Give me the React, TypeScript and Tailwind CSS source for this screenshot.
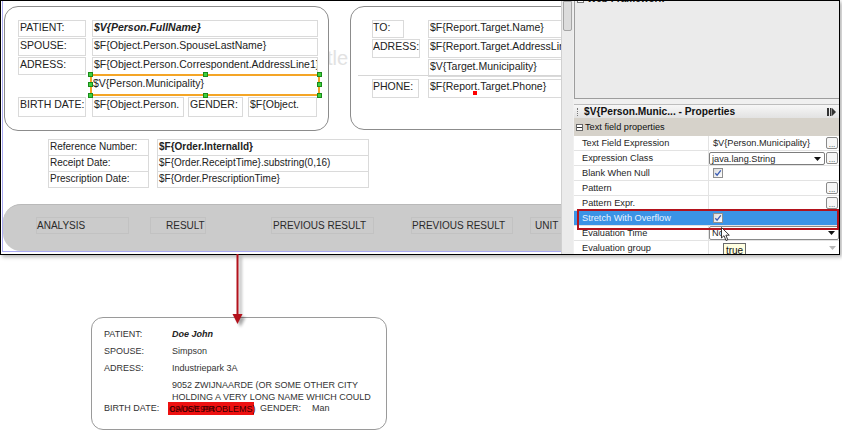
import React from "react";

const cellB = "border border-[#dadada] shrink-0 overflow-hidden whitespace-nowrap";

function Handle({ cls }: { cls: string }) {
  return <div className={"absolute w-[5px] h-[5px] bg-[#3fd13f] border border-[#1b8a1b] " + cls} />;
}

function Check() {
  return (
    <div className="w-[10px] h-[10px] border border-[#8f8f8f] bg-linear-to-br from-[#dcdcdc] to-[#ffffff] flex items-center justify-center">
      <svg width="8" height="8" viewBox="0 0 8 8">
        <path d="M1.3 4.2 L3.1 6.2 L6.8 1.4" stroke="#3a5cb4" strokeWidth="1.3" fill="none" />
      </svg>
    </div>
  );
}

function Dots() {
  return (
    <div className="absolute right-[1px] top-[1px] w-[12px] h-[12px] border border-[#8a8a8a] rounded-[2px] bg-[#f7f7f7] text-[8px] leading-[13px] text-center text-[#333]">
      ...
    </div>
  );
}

function Arrow({ color = "#111" }: { color?: string }) {
  return (
    <svg width="7" height="4" viewBox="0 0 7 4" className="block">
      <path d="M0 0 L7 0 L3.5 4 Z" fill={color} />
    </svg>
  );
}

function PropRow({
  label,
  children,
  hi = false,
}: {
  label: string;
  children?: React.ReactNode;
  hi?: boolean;
}) {
  return (
    <div
      className={
        "flex h-[15px] shrink-0 border-b border-[#e3e3e3] text-[9.2px] leading-[14px] " +
        (hi ? "bg-[#3b93e6] text-[#eaf4ff]" : "bg-white text-[#1e1e1e]")
      }
    >
      <div className={"w-[135px] pl-[8px] whitespace-nowrap border-r " + (hi ? "border-[#3b93e6]" : "border-[#e3e3e3]")}>
        {label}
      </div>
      <div className="flex-1 relative">{children}</div>
    </div>
  );
}

export default function App() {
  return (
    <div className="w-[842px] h-[439px] bg-white relative overflow-hidden font-['Liberation_Sans',Arial,sans-serif]">
      {/* top screenshot */}
      <div className="w-[840px] h-[255px] border border-black flex shadow-[2px_2px_4px_rgba(0,0,0,0.3)] bg-white">
        {/* design canvas */}
        <div className="w-[560px] h-full shrink-0 relative overflow-hidden bg-white">
          <div className="ml-[1px] h-[251px] border-l border-b border-[#a9a9f2] flex flex-col relative">
            {/* ghost band title */}
            <div className="absolute left-[308px] top-[45px] text-[20px] text-[#e2e2e2] leading-[24px]">Title</div>

            <div className="flex pt-[5px] shrink-0">
              {/* patient box */}
              <div className="ml-[1px] w-[325px] h-[125px] shrink-0 border border-[#8c8c8c] rounded-[14px] bg-white pl-[13px] pt-[13px] relative text-[10.5px] leading-[13px] text-[#222] flex flex-col">
                <div className="flex h-[17px]">
                  <div className={cellB + " w-[68px] pl-px"}>PATIENT:</div>
                  <div className={cellB + " ml-[6px] w-[226px] pl-px font-bold italic"}>$V&#123;Person.FullName&#125;</div>
                </div>
                <div className="flex h-[18px] mt-[1px]">
                  <div className={cellB + " w-[68px] pl-px"}>SPOUSE:</div>
                  <div className={cellB + " ml-[6px] w-[226px] pl-px"}>$F&#123;Object.Person.SpouseLastName&#125;</div>
                </div>
                <div className="flex h-[18px] mt-[1px]">
                  <div className={cellB + " w-[68px] pl-px"}>ADRESS:</div>
                  <div className={cellB + " ml-[6px] w-[226px] pl-px"}>$F&#123;Object.Person.Correspondent.AddressLine1&#125;</div>
                </div>
                <div className="flex h-[22px] -mt-[1px]">
                  <div className="ml-[72px] w-[230px] h-[22px] border-2 border-[#f4a526] relative leading-[14px]">
                    <span className="pl-px">$V&#123;Person.Municipality&#125;</span>
                    <Handle cls="-left-[4px] -top-[4px]" />
                    <Handle cls="left-[111px] -top-[4px]" />
                    <Handle cls="-right-[4px] -top-[4px]" />
                    <Handle cls="-left-[4px] top-[6px]" />
                    <Handle cls="-right-[4px] top-[6px]" />
                    <Handle cls="-left-[4px] -bottom-[4px]" />
                    <Handle cls="left-[111px] -bottom-[4px]" />
                    <Handle cls="-right-[4px] -bottom-[4px]" />
                  </div>
                </div>
                <div className="flex h-[20px] mt-[1px]">
                  <div className={cellB + " w-[68px] pl-px"}>BIRTH DATE:</div>
                  <div className={cellB + " ml-[6px] w-[92px] pl-px"}>$F&#123;Object.Person.</div>
                  <div className={cellB + " ml-[4px] w-[55px] pl-px"}>GENDER:</div>
                  <div className={cellB + " ml-[5px] w-[69px] pl-px"}>$F&#123;Object.</div>
                </div>
              </div>

              {/* target box */}
              <div className="ml-[21px] w-[260px] h-[124px] shrink-0 border border-[#8c8c8c] rounded-[14px] bg-white pl-[21px] pt-[13px] relative text-[10.5px] leading-[13px] text-[#222] flex flex-col">
                <div className="absolute left-[7px] top-[68px] w-[240px] h-px bg-[#d6d6d6]" />
                <div className="flex h-[18px]">
                  <div className={cellB + " w-[32px]"}>TO:</div>
                  <div className={cellB + " ml-[24px] w-[200px] pl-px"}>$F&#123;Report.Target.Name&#125;</div>
                </div>
                <div className="flex h-[19px] mt-[1px]">
                  <div className={cellB + " w-[48px]"}>ADRESS:</div>
                  <div className={cellB + " ml-[8px] w-[200px] pl-px"}>$F&#123;Report.Target.AddressLine1&#125;</div>
                </div>
                <div className="flex h-[18px] mt-[1px]">
                  <div className={cellB + " ml-[56px] w-[200px] pl-px"}>$V&#123;Target.Municipality&#125;</div>
                </div>
                <div className="flex h-[19px] mt-[2px] relative">
                  <div className={cellB + " w-[47px] bg-white"}>PHONE:</div>
                  <div className={cellB + " ml-[9px] w-[200px] pl-px bg-white"}>$F&#123;Report.Target.Phone&#125;</div>
                  <div className="absolute left-[101px] top-[12px] w-[4px] h-[4px] bg-[#ff0000]" />
                </div>
              </div>
            </div>

            {/* order section */}
            <div className="flex flex-col ml-[45px] mt-[8px] text-[10px] leading-[13px] text-[#222] shrink-0">
              <div className="flex h-[17px]">
                <div className={cellB + " w-[101px] pl-px"}>Reference Number:</div>
                <div className={cellB + " ml-[8px] w-[212px] pl-px font-bold"}>$F&#123;Order.InternalId&#125;</div>
              </div>
              <div className="flex h-[17px] -mt-px">
                <div className={cellB + " w-[101px] pl-px"}>Receipt Date:</div>
                <div className={cellB + " ml-[8px] w-[212px] pl-px"}>$F&#123;Order.ReceiptTime&#125;.substring(0,16)</div>
              </div>
              <div className="flex h-[17px] -mt-px">
                <div className={cellB + " w-[101px] pl-px"}>Prescription Date:</div>
                <div className={cellB + " ml-[8px] w-[212px] pl-px"}>$F&#123;Order.PrescriptionTime&#125;</div>
              </div>
            </div>

            {/* column header band */}
            <div className="mt-[16px] h-[47px] w-[600px] shrink-0 rounded-l-[18px] bg-[#cbcbcb] border-t border-[#b9b9b9] flex items-start pt-[12px] text-[10px] leading-[15px] text-[#2a2a2a]">
              <div className="ml-[33px] w-[93px] h-[17px] border border-[#c2c2c2] whitespace-nowrap">ANALYSIS</div>
              <div className="ml-[21px] w-[56px] h-[17px] border border-[#c2c2c2] pl-[15px] whitespace-nowrap">RESULT</div>
              <div className="ml-[65px] w-[103px] h-[17px] border border-[#c2c2c2] pl-px whitespace-nowrap">PREVIOUS RESULT</div>
              <div className="ml-[37px] w-[102px] h-[17px] border border-[#c2c2c2] whitespace-nowrap">PREVIOUS RESULT</div>
              <div className="ml-[17px] w-[60px] h-[17px] border border-[#c2c2c2] pl-[4px] whitespace-nowrap">UNIT</div>
            </div>
          </div>
        </div>

        {/* scrollbar */}
        <div className="w-[12px] h-full shrink-0 bg-[#ebebeb] border-l border-[#d0d0d0] relative">
          <div className="absolute left-[1px] top-0 w-[9px] h-[30px] bg-[#dcdcdc] border border-[#a5a5a5] rounded-b-[2px]" />
        </div>

        {/* right panel */}
        <div className="flex-1 h-full bg-[#f0f0f0] relative flex flex-col overflow-hidden">
          <div className="ml-[1px] h-[98px] shrink-0 border-l border-b border-[#9d9d9d] bg-[#ebebeb]">
            <div className="h-[4px] overflow-hidden">
              <div className="-mt-[8px] flex items-center gap-[3px] pl-[2px]">
                <div className="w-[7px] h-[7px] border border-[#777] bg-white" />
                <span className="text-[10px] font-bold leading-[12px] text-[#222]">Web Framework</span>
              </div>
            </div>
          </div>
          <div className="h-[5px] shrink-0" />
          {/* properties title bar */}
          <div className="ml-[1px] h-[14px] shrink-0 flex items-center bg-linear-to-b from-[#f7f7f7] to-[#e2e2e2] border-t border-[#bdbdbd] relative">
            <div className="ml-[3px] w-[2px] h-[8px] border-l border-dotted border-[#777]" />
            <span className="ml-[5px] text-[10.2px] font-bold leading-[13px] text-[#111] whitespace-nowrap">$V&#123;Person.Munic... - Properties</span>
            <svg className="absolute right-[3px] top-[3px]" width="9" height="8" viewBox="0 0 9 8">
              <rect x="0" y="0" width="2" height="8" fill="#333" />
              <rect x="3" y="0" width="1.5" height="8" fill="#333" />
              <path d="M5 0 L9 4 L5 8 Z" fill="#333" />
            </svg>
          </div>
          {/* group header */}
          <div className="ml-[1px] h-[18px] shrink-0 flex items-center bg-[#d6d2ca] text-[9.2px] text-[#111]">
            <div className="ml-[2px] w-[7px] h-[7px] border border-[#666] bg-white flex items-center justify-center">
              <div className="w-[5px] h-px bg-[#333]" />
            </div>
            <span className="ml-[2px] leading-[12px] whitespace-nowrap">Text field properties</span>
          </div>
          {/* property rows */}
          <div className="ml-[1px] flex flex-col">
            <PropRow label="Text Field Expression">
              <div className="absolute left-[4px] top-0 whitespace-nowrap">$V&#123;Person.Municipality&#125;</div>
              <Dots />
            </PropRow>
            <PropRow label="Expression Class">
              <div className="absolute left-0 top-[1px] w-[116px] h-[13px] border border-[#7d7d7d] rounded-[2px] bg-white">
                <div className="absolute left-[2px] -top-[1px] whitespace-nowrap">java.lang.String</div>
                <div className="absolute right-[3px] top-[4px]"><Arrow /></div>
              </div>
              <Dots />
            </PropRow>
            <PropRow label="Blank When Null">
              <div className="absolute left-[4px] top-[2px]"><Check /></div>
            </PropRow>
            <PropRow label="Pattern">
              <Dots />
            </PropRow>
            <PropRow label="Pattern Expr.">
              <Dots />
            </PropRow>
            <PropRow label="Stretch With Overflow" hi>
              <div className="absolute left-[4px] top-[2px]"><Check /></div>
            </PropRow>
            <PropRow label="Evaluation Time">
              <div className="absolute left-0 top-0 right-0 h-[14px] border border-[#8a8a8a] rounded-[2px] bg-white">
                <div className="absolute left-[2px] -top-[1px]">No</div>
                <div className="absolute right-[3px] top-[4px]"><Arrow /></div>
              </div>
            </PropRow>
            <PropRow label="Evaluation group">
              <div className="absolute right-[3px] top-[5px]"><Arrow color="#b8b8b8" /></div>
            </PropRow>
          </div>

          {/* red highlight frame */}
          <div className="absolute left-[4px] top-[208px] w-[262px] h-[21px] border-2 border-[#b3121c]" />
          {/* mouse cursor */}
          <svg className="absolute left-[148px] top-[226px]" width="10" height="15" viewBox="0 0 10 15">
            <path d="M0.5 0.5 L0.5 11 L3 8.7 L5 13.5 L6.8 12.8 L4.9 8.2 L8.3 8.2 Z" fill="#fff" stroke="#222" strokeWidth="0.9" strokeLinejoin="round" />
          </svg>
          {/* tooltip */}
          <div className="absolute left-[150px] top-[242px] w-[23px] h-[15px] bg-[#ffffe1] border border-[#6b6b6b] text-[10px] leading-[13px] text-center text-[#111]">
            true
          </div>
        </div>
      </div>

      {/* annotation arrow */}
      <svg className="absolute left-[228px] top-[254px]" width="22" height="78" viewBox="0 0 22 78">
        <defs>
          <filter id="sh" x="-50%" y="-20%" width="200%" height="140%">
            <feGaussianBlur stdDeviation="1.6" />
          </filter>
        </defs>
        <g filter="url(#sh)" opacity="0.35" transform="translate(3,3)">
          <rect x="8.5" y="0" width="2" height="62" fill="#000" />
          <path d="M4.5 60 L14.5 60 L9.5 70 Z" fill="#000" />
        </g>
        <rect x="8.5" y="0" width="2" height="62" fill="#b3121c" />
        <path d="M4.5 60 L14.5 60 L9.5 70 Z" fill="#b3121c" />
      </svg>

      {/* rendered output card */}
      <div className="ml-[91px] mt-[62px] w-[296px] h-[113px] border border-[#9a9a9a] rounded-[12px] pl-[12px] pt-[8px] text-[9px] text-[#333] flex flex-col">
        <div className="flex h-[17px] items-center">
          <div className="w-[68px]">PATIENT:</div>
          <div className="font-bold italic text-[#222]">Doe John</div>
        </div>
        <div className="flex h-[17px] items-center">
          <div className="w-[68px]">SPOUSE:</div>
          <div>Simpson</div>
        </div>
        <div className="flex h-[17px] items-center">
          <div className="w-[68px]">ADRESS:</div>
          <div>Industriepark 3A</div>
        </div>
        <div className="ml-[68px] mt-[2px] leading-[12px] whitespace-nowrap">
          <div>9052 ZWIJNAARDE (OR SOME OTHER CITY</div>
          <div>HOLDING A VERY LONG NAME WHICH COULD</div>
        </div>
        <div className="flex h-[12px] -mt-[1px] items-center leading-[12px]">
          <div className="w-[64px]">BIRTH DATE:</div>
          <div className="relative w-[86px] h-[13px] bg-[#ee1111]">
            <span className="absolute left-[2px] top-[1px] text-[#5a0000] whitespace-nowrap">09/06/1994</span>
            <span className="absolute left-[1px] top-[1px] text-[#3a0000] whitespace-nowrap">CAUSE PROBLEMS)</span>
          </div>
          <div className="ml-[6px] w-[52px]">GENDER:</div>
          <div>Man</div>
        </div>
      </div>
    </div>
  );
}
